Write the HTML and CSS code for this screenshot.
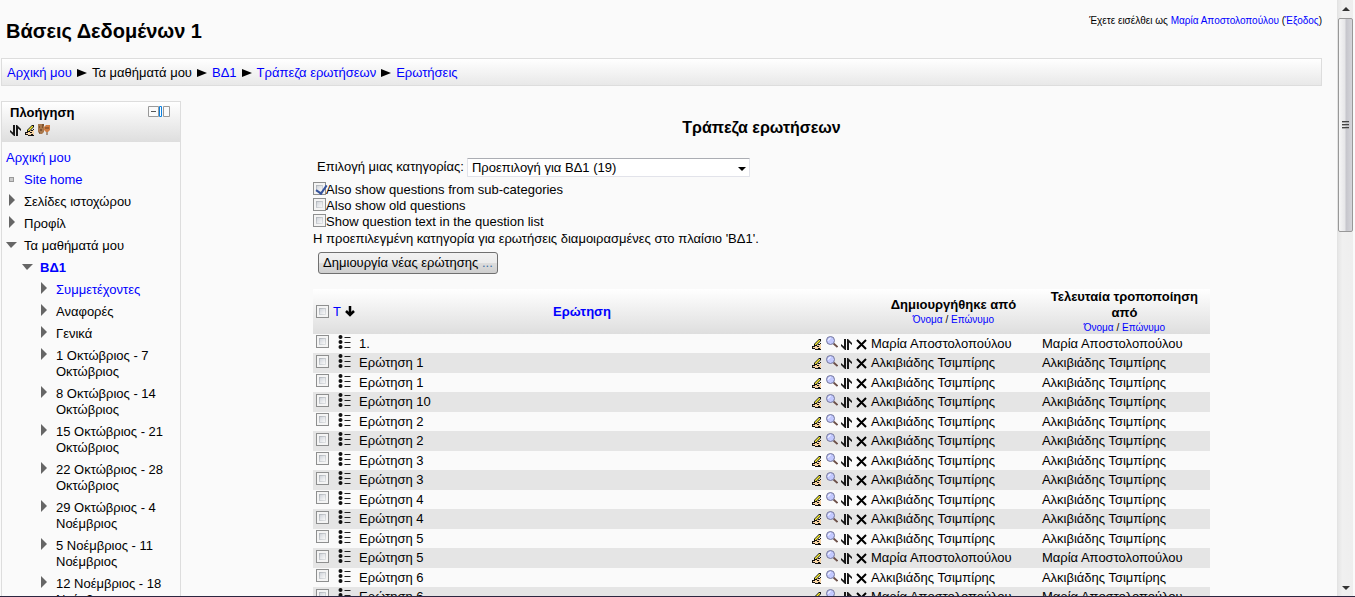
FILE: index.html
```html
<!DOCTYPE html>
<html lang="el">
<head>
<meta charset="utf-8">
<title>Τράπεζα ερωτήσεων</title>
<link rel="stylesheet" href="styles.css">
</head>
<body>
<svg class="sprite" aria-hidden="true">
  <symbol id="i-move" viewBox="0 0 11 11"><path d="M3 0H5V11H4L0 7V5L3 7.500ZM6 11V0H7L11 4V6L8 3.500V11Z" fill="#181818"/></symbol>
  <symbol id="i-edit" viewBox="0 0 11 11"><path d="M3 6H7L10 5V10H4L1 9Z" fill="#f6d3a4"/><path d="M1 7H4V8H1ZM0 8H1V10H4V9H2V8ZM4 10H10V11H4ZM9 4H10V5H9ZM7 5H9V6H7ZM6 7H8V8H6ZM7 9H9V10H7Z" fill="#111"/><path d="M3 7V5L8 0H10V2L6 6V7Z" fill="#111"/><path d="M4 6V5L8 1H9V2L5 6Z" fill="#f8ee36"/></symbol>
  <symbol id="i-mask" viewBox="0 0 12 12"><path d="M0 0H6V8L4 10H2L0 8Z" fill="#a9784c"/><path d="M1 3H2M4 3H5M2 6H4M1 9H2M4 1H6" stroke="#523317"/><path d="M6 3L8 1H12V6L10 8H8L6 6Z" fill="#cf7d42"/><path d="M8 3V5M10 3V5M9 8V11" stroke="#68401f"/></symbol>
  <symbol id="i-zoom" viewBox="0 0 12 12"><path d="M7.500 7.500L11.500 11" stroke="#6b4f48" stroke-width="1.800"/><circle cx="4.500" cy="4.500" r="4" fill="#c3c9ff" stroke="#74779a"/><path d="M2.500 4.500A2 2 0 0 1 4.500 2.500" stroke="#fff" fill="none"/></symbol>
  <symbol id="i-del" viewBox="0 0 11 11"><path d="M1 1L10 10M10 1L1 10" stroke="#000" stroke-width="2"/></symbol>
  <symbol id="i-multi" viewBox="0 0 13 14"><g fill="#111"><circle cx="2.500" cy="2" r="2"/><circle cx="2.500" cy="7" r="2"/><circle cx="2.500" cy="12" r="2"/></g><path d="M6.500 2.500H12.500M6.500 7.500H12.500M6.500 12.500H12.500" stroke="#222"/></symbol>
  <symbol id="i-down" viewBox="0 0 10 11"><path d="M5 0V9M1 5L5 9L9 5" stroke="#000" stroke-width="2.500" fill="none"/></symbol>
  <symbol id="i-dock" viewBox="0 0 22 11"><path d="M.5.500H10.500V10.500H.5ZM15.500.500H21.500V10.500H15.500Z" fill="#fafafa" stroke="#999"/><path d="M3 5.500H8" stroke="#555"/><path d="M11.500.500H13.500V10.500H11.500Z" fill="#fff" stroke="#0b80e0"/></symbol>
</svg>
<div class="window">
  <div class="page">
    <header class="header">
      <h1>Βάσεις Δεδομένων 1</h1>
      <div class="login">Έχετε εισέλθει ως <a href="#">Μαρία Αποστολοπούλου</a> (<a href="#">Έξοδος</a>)</div>
    </header>
    <nav class="crumbs" aria-label="Διαδρομή">
      <a href="#">Αρχική μου</a><i class="sep"></i><span>Τα μαθήματά μου</span><i class="sep"></i><a href="#">ΒΔ1</a><i class="sep"></i><a href="#">Τράπεζα ερωτήσεων</a><i class="sep"></i><a href="#">Ερωτήσεις</a>
    </nav>
    <div class="columns">
      <aside class="block">
        <div class="block-head">
          <div class="block-title">
            <h2>Πλοήγηση</h2>
            <button class="icon" aria-label="Απόκρυψη"><svg width="22" height="11"><use href="#i-dock"/></svg></button>
          </div>
          <div class="block-tools">
            <button class="icon" aria-label="Μετακίνηση"><svg width="11" height="11"><use href="#i-move"/></svg></button>
            <button class="icon" aria-label="Επεξεργασία"><svg width="11" height="11"><use href="#i-edit"/></svg></button>
            <button class="icon" aria-label="Ρόλοι"><svg width="12" height="12"><use href="#i-mask"/></svg></button>
          </div>
        </div>
        <ul class="tree">
          <li class="root"><a href="#">Αρχική μου</a></li>
          <li class="item"><i class="square"></i><a href="#">Site home</a></li>
          <li class="item"><i class="closed"></i><span>Σελίδες ιστοχώρου</span></li>
          <li class="item"><i class="closed"></i><span>Προφίλ</span></li>
          <li class="item"><i class="open"></i><span>Τα μαθήματά μου</span></li>
          <li class="item level2"><i class="open"></i><a class="current" href="#">ΒΔ1</a></li>
          <li class="item level3"><i class="closed"></i><a href="#">Συμμετέχοντες</a></li>
          <li class="item level3"><i class="closed"></i><span>Αναφορές</span></li>
          <li class="item level3"><i class="closed"></i><span>Γενικά</span></li>
          <li class="item level3"><i class="closed"></i><span>1 Οκτώβριος - 7 Οκτώβριος</span></li>
          <li class="item level3"><i class="closed"></i><span>8 Οκτώβριος - 14 Οκτώβριος</span></li>
          <li class="item level3"><i class="closed"></i><span>15 Οκτώβριος - 21 Οκτώβριος</span></li>
          <li class="item level3"><i class="closed"></i><span>22 Οκτώβριος - 28 Οκτώβριος</span></li>
          <li class="item level3"><i class="closed"></i><span>29 Οκτώβριος - 4 Νοέμβριος</span></li>
          <li class="item level3"><i class="closed"></i><span>5 Νοέμβριος - 11 Νοέμβριος</span></li>
          <li class="item level3"><i class="closed"></i><span>12 Νοέμβριος - 18 Νοέμβριος</span></li>
        </ul>
      </aside>
      <main class="main">
        <h2 class="title">Τράπεζα ερωτήσεων</h2>
        <div class="bank">
          <div class="category">
            <label for="cat">Επιλογή μιας κατηγορίας:</label>
            <span class="select"><select id="cat"><option>Προεπιλογή για ΒΔ1 (19)</option></select></span>
          </div>
          <label class="option"><input type="checkbox" checked>Also show questions from sub-categories</label>
          <label class="option"><input type="checkbox">Also show old questions</label>
          <label class="option"><input type="checkbox">Show question text in the question list</label>
          <p class="info">Η προεπιλεγμένη κατηγορία για ερωτήσεις διαμοιρασμένες στο πλαίσιο 'ΒΔ1'.</p>
          <button class="create">Δημιουργία νέας ερώτησης <span>...</span></button>
          <table class="questions">
            <colgroup><col class="c-check"><col class="c-type"><col><col class="c-tools"><col class="c-name"><col class="c-name"></colgroup>
            <thead>
              <tr>
                <th><input type="checkbox" aria-label="Επιλογή όλων"></th>
                <th><span class="type-head"><a href="#">Τ</a><svg width="10" height="11"><use href="#i-down"/></svg></span></th>
                <th><a href="#">Ερώτηση</a></th>
                <th></th>
                <th>Δημιουργήθηκε από<div class="sort"><a href="#">Όνομα</a> / <a href="#">Επώνυμο</a></div></th>
                <th>Τελευταία τροποποίηση από<div class="sort"><a href="#">Όνομα</a> / <a href="#">Επώνυμο</a></div></th>
              </tr>
            </thead>
            <tbody id="rows"></tbody>
          </table>
        </div>
      </main>
    </div>
  </div>
  <div class="scrollbar" aria-hidden="true">
    <i class="arrow up"></i>
    <div class="track"><div class="thumb"><i></i><i></i><i></i></div></div>
    <i class="arrow down"></i>
  </div>
</div>
<script src="rows.js"></script>
</body>
</html>
```
FILE: styles.css
```css
* { box-sizing: border-box; }
body { margin: 0; background: #fafafa; color: #000; font: 13px/16px "Liberation Sans", Arial, sans-serif; }
h1, h2, p, ul { margin: 0; padding: 0; }
ul { list-style: none; }
a { color: #00f; text-decoration: none; }
svg { display: block; }
.sprite { position: absolute; width: 0; height: 0; }
.window { display: flex; height: 100vh; overflow: hidden; padding-right: 2px; border-bottom: 1px solid #2c2640; }
.page { flex: 1; min-width: 0; padding: 0 15px 0 1px; }
.header { display: flex; justify-content: space-between; align-items: flex-start; height: 58px; padding: 15px 0 0 5px; }
h1 { font-size: 20px; line-height: 32px; }
.login { font-size: 10px; line-height: 12px; }
.crumbs { display: flex; align-items: center; height: 28px; padding: 1px 0 0 5px; border: 1px solid #ddd; background: linear-gradient(#fff, #e8e8e8); }
.sep { margin: 0 5px; border: solid transparent; border-width: 4px 0 4px 10px; border-left-color: #000; }
.columns { display: flex; align-items: flex-start; margin-top: 15px; }
.block { flex: none; width: 180px; border: 1px solid #ddd; }
.block-head { height: 40px; padding: 3px 10px 0 8px; background: linear-gradient(#fff, #dedede); }
.block-title { display: flex; justify-content: space-between; align-items: flex-start; }
.block-title h2 { font-size: 13px; line-height: 16px; }
.icon { display: block; padding: 0; border: 0; background: none; }
.block-title .icon { margin-top: 1px; }
.block-tools { display: flex; gap: 3px; padding-top: 3px; }
.tree { padding: 8px 10px 0 4px; }
.root { margin-bottom: 6px; }
.item { display: flex; margin-bottom: 6px; }
.item i { flex: none; }
.level2 { padding-left: 16px; }
.level3 { padding-left: 32px; }
.current { font-weight: bold; }
.square { width: 5px; height: 5px; margin: 5px 10px 0 3px; border: 1px solid #999; background: #ccc; }
.closed { height: 0; margin: 0 9px 0 3px; border: solid transparent; border-width: 6px 0 6px 6px; border-left-color: #666; }
.open { height: 0; margin: 4px 7px 0 0; border: solid transparent; border-width: 6px 6px 0 5px; border-top-color: #666; }
.main { flex: 1; min-width: 0; padding-left: 20px; }
.title { padding-top: 17px; font-size: 16px; line-height: 20px; text-align: center; }
.bank { width: 80%; margin: 19px auto 0; }
.category { display: flex; align-items: center; gap: 3px; height: 20px; margin-bottom: 5px; padding-left: 4px; }
.select { position: relative; width: 283px; }
select { appearance: none; display: block; width: 100%; height: 19px; padding: 1px 4px 0; border: 1px solid #e2e3ea; border-top-color: #abadb3; border-radius: 1px; background: #fff; color: #000; font: inherit; }
.select::after { content: ""; position: absolute; right: 4px; top: 9px; border: solid transparent; border-width: 4px 4px 0; border-top-color: #000; pointer-events: none; }
input { appearance: none; flex: none; display: block; width: 13px; height: 13px; margin: 0; border: 1px solid #8e8f8f; background: linear-gradient(135deg, #d2d6dc, #f8f8f8) 3px 3px / 5px 5px no-repeat, linear-gradient(135deg, #aeb3b9, #e4e6e8) 2px 2px / 7px 7px no-repeat, #f4f4f4; }
input:checked::after { content: ""; display: block; width: 5px; height: 9px; margin-left: 4px; border: solid #34529c; border-width: 0 2px 2px 0; transform: rotate(35deg); }
.option { display: flex; height: 16px; }
.info { margin-top: 1px; }
.create { display: block; height: 22px; margin: 5px 0 15px 5px; padding: 0 4px; border: 1px solid #707070; border-radius: 3px; background: linear-gradient(#f2f2f2, #ebebeb 50%, #ddd 50%, #cfcfcf); color: #000; font: inherit; }
.create span { color: #3b6fa5; }
.questions { width: 100%; table-layout: fixed; border-collapse: collapse; }
.c-check { width: 20px; }
.c-type { width: 23px; }
.c-tools { width: 60px; }
.c-name { width: 171px; }
th, td { padding: 0; }
th:first-child, td:first-child { padding-left: 3px; }
thead tr { height: 45px; background: linear-gradient(#fff, #dedede); }
.type-head { display: flex; align-items: center; gap: 4px; font-weight: normal; }
.sort { font-size: 10px; line-height: 13px; font-weight: normal; }
tbody tr { height: 19px; }
tbody tr:nth-child(even) { height: 20px; background: #e5e5e5; }
td { height: 19px; vertical-align: top; line-height: 19px; white-space: nowrap; }
td input { margin-top: 1px; }
tr:nth-child(even) td input { margin-top: 2px; }
td .type { margin: 1px 0 0 5px; }
td:nth-child(n+3) { padding-left: 3px; }
.tools { display: flex; align-items: flex-end; gap: 4px; height: 16px; }
.tools .preview { margin: 0 -1px 2px 0; }
.scrollbar { flex: none; display: flex; flex-direction: column; align-items: center; width: 16px; border-left: 1px solid #e3e3e3; background: linear-gradient(90deg, #e6e6e6, #f0f0f0 30%, #eee); }
.arrow { height: 0; border: solid transparent; }
.up { margin: 7px 0; border-width: 0 4px 4px; border-bottom-color: #333; }
.down { margin: 5px 0 6px; border-width: 4px 4px 0; border-top-color: #333; }
.track { flex: 1; width: 100%; }
.thumb { display: flex; flex-direction: column; align-items: center; justify-content: center; gap: 1px; height: 38%; border: 1px solid #989898; border-radius: 2px; background: linear-gradient(90deg, #f6f6f6, #e6e6e8 45%, #c6c6cc 55%, #d5d5da); }
.thumb i { width: 7px; height: 2px; border-top: 1px solid #444; background: #aaa; }
```
FILE: rows.js
```js
const maria = "Μαρία Αποστολοπούλου";
const alk = "Αλκιβιάδης Τσιμπίρης";
const rows = [
  ["1.", maria], ["Ερώτηση 1", alk], ["Ερώτηση 1", alk], ["Ερώτηση 10", alk],
  ["Ερώτηση 2", alk], ["Ερώτηση 2", alk], ["Ερώτηση 3", alk], ["Ερώτηση 3", alk],
  ["Ερώτηση 4", alk], ["Ερώτηση 4", alk], ["Ερώτηση 5", alk], ["Ερώτηση 5", maria],
  ["Ερώτηση 6", alk], ["Ερώτηση 6", maria]
];
const icon = (id, label, size) =>
  `<a href="#" class="${id === "zoom" ? "preview" : "tool"}" aria-label="${label}"><svg width="${size}" height="${size}"><use href="#i-${id}"/></svg></a>`;
const tools = icon("edit", "Επεξεργασία", 11) + icon("zoom", "Προεπισκόπηση", 12)
  + icon("move", "Μετακίνηση", 11) + icon("del", "Διαγραφή", 11);
document.getElementById("rows").innerHTML = rows.map(([name, person]) => `<tr>
  <td><input type="checkbox" aria-label="${name}"></td>
  <td><svg class="type" width="13" height="14"><use href="#i-multi"/></svg></td>
  <td>${name}</td>
  <td><div class="tools">${tools}</div></td>
  <td>${person}</td><td>${person}</td></tr>`).join("");
```
